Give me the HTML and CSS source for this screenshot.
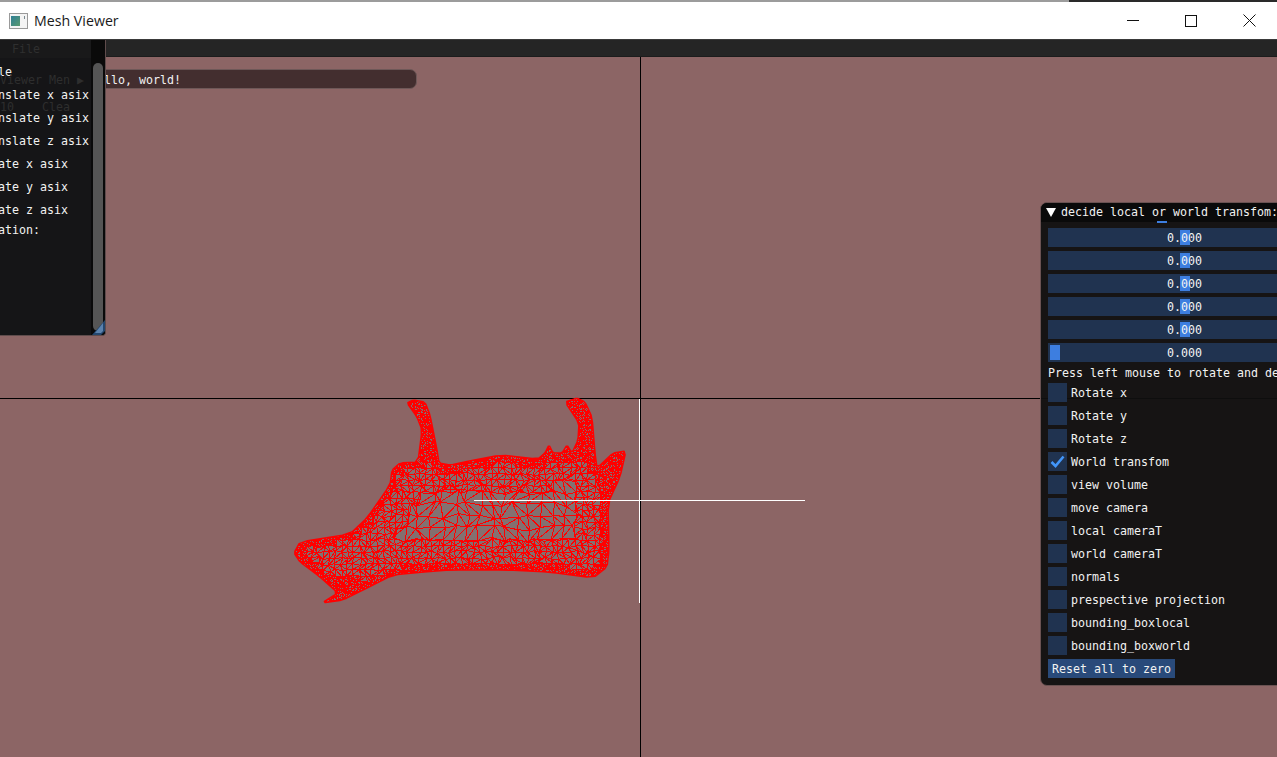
FILE: index.html
```html
<!DOCTYPE html>
<html lang="en">
<head>
    <meta charset="UTF-8">
    <title>Mesh Viewer</title>
    <link rel="stylesheet" href="styles.css">
</head>
<body>

<div class="top-edge">
    <div class="top-edge-light"></div>
    <div class="top-edge-dark"></div>
</div>

<header class="titlebar">
    <svg class="app-icon" width="19" height="16" viewBox="0 0 19 16">
        <defs>
            <linearGradient id="iconFill" x1="0" y1="0" x2="1" y2="1">
                <stop offset="0" stop-color="#2f7f95"/>
                <stop offset="1" stop-color="#5a9a70"/>
            </linearGradient>
        </defs>
        <rect x="0.5" y="0.5" width="18" height="15" fill="#f4f4f4" stroke="#9a9a9a"/>
        <rect x="2" y="3" width="9" height="10" fill="url(#iconFill)"/>
        <rect x="15" y="3" width="1" height="3" fill="#7a8a90"/>
    </svg>
    <span class="app-title">Mesh Viewer</span>
    <div class="win-buttons">
        <div class="win-button">
            <svg width="12" height="12" viewBox="0 0 12 12"><path d="M0 5.5H12" stroke="#111"/></svg>
        </div>
        <div class="win-button">
            <svg width="12" height="12" viewBox="0 0 12 12"><rect x="0.5" y="0.5" width="11" height="11" fill="none" stroke="#111"/></svg>
        </div>
        <div class="win-button">
            <svg width="13" height="13" viewBox="0 0 13 13"><path d="M0.5 0.5L12.5 12.5M12.5 0.5L0.5 12.5" stroke="#111"/></svg>
        </div>
    </div>
</header>

<main class="app">
    <div class="menubar"></div>

    <svg class="scene" viewBox="0 57 1277 700" width="1277" height="700">
        <defs>
            <clipPath id="meshClip">
                <polygon id="meshOutline" points="407,403 413,400 425,402 430,415 437,450 439,463 450,465 470,461 500,455 538,459 545,453 549,445 553,453 562,453 567,445 572,453 578,440 579,423 565,402 577,398 585,402 592,417 595,453 597,468 613,453 626,451 620,477 608,503 609,550 607,567 593,578 550,572 507,570 450,570 423,572 393,575 367,588 343,600 322,603 338,593 320,577 300,562 294,553 300,542 350,534 367,518 390,485 392,470 400,463 418,462 422,430 417,417"/>
            </clipPath>
        </defs>
        <path d="M0 398.5H1277M640.5 57V757" stroke="#000" shape-rendering="crispEdges"/>
        <use href="#meshOutline" class="mesh-fill"/>
        <path id="meshWires" class="mesh-wires" clip-path="url(#meshClip)"/>
        <use href="#meshOutline" class="mesh-edge"/>
        <path d="M474 500.5H805M639.5 399V603" stroke="#fff" shape-rendering="crispEdges"/>
    </svg>

    <div class="hello-bar">Hello, world!</div>

    <section class="left-panel">
        <div class="left-menu">File</div>
        <div class="left-rows">
            <div class="left-row">Scale</div>
            <div class="left-row">translate x asix</div>
            <div class="left-row">translate y asix</div>
            <div class="left-row">translate z asix</div>
            <div class="left-row">rotate x asix</div>
            <div class="left-row">rotate y asix</div>
            <div class="left-row">rotate z asix</div>
            <div class="left-row left-row-last">Rotation:</div>
        </div>
        <div class="ghost ghost-menu">Viewer Men ▶</div>
        <div class="ghost ghost-ten">10</div>
        <div class="ghost ghost-clear">Clea</div>
        <div class="scroll-track"><div class="scroll-grab"></div></div>
        <svg class="resize-grip" width="13" height="16" viewBox="0 0 13 16">
            <path d="M0 16L13 1V12L9 16Z" fill="#24476f"/>
            <path d="M3 14L11 4V12L9 14Z" fill="#5b82ad"/>
        </svg>
    </section>

    <section class="right-panel">
        <div class="right-title">
            <svg width="10" height="9" viewBox="0 0 10 9"><path d="M0 0H10L5 9Z" fill="#fff"/></svg>
            <span>decide local or world transfom:</span>
            <div class="title-sliver"></div>
        </div>
        <div class="right-body">
            <div class="slider"><div class="grab"></div><span>0.000</span></div>
            <div class="slider"><div class="grab"></div><span>0.000</span></div>
            <div class="slider"><div class="grab"></div><span>0.000</span></div>
            <div class="slider"><div class="grab"></div><span>0.000</span></div>
            <div class="slider"><div class="grab"></div><span>0.000</span></div>
            <div class="slider"><div class="grab grab-min"></div><span>0.000</span></div>
            <p class="hint">Press left mouse to rotate and decide</p>
            <label class="check"><span class="box"></span>Rotate x</label>
            <label class="check"><span class="box"></span>Rotate y</label>
            <label class="check"><span class="box"></span>Rotate z</label>
            <label class="check">
                <span class="box">
                    <svg width="15" height="13" viewBox="0 0 15 13"><path d="M1.5 7L5.5 11L13.5 1.5" fill="none" stroke="#4296fa" stroke-width="2.6"/></svg>
                </span>World transfom
            </label>
            <label class="check"><span class="box"></span>view volume</label>
            <label class="check"><span class="box"></span>move camera</label>
            <label class="check"><span class="box"></span>local cameraT</label>
            <label class="check"><span class="box"></span>world cameraT</label>
            <label class="check"><span class="box"></span>normals</label>
            <label class="check"><span class="box"></span>prespective projection</label>
            <label class="check"><span class="box"></span>bounding_boxlocal</label>
            <label class="check"><span class="box"></span>bounding_boxworld</label>
            <button class="reset">Reset all to zero</button>
        </div>
    </section>
</main>

<script src="mesh.js"></script>
</body>
</html>
```

FILE: styles.css
```css
* {
    box-sizing: border-box;
}
html, body {
    margin: 0;
    height: 100%;
    overflow: hidden;
}
body {
    display: flex;
    flex-direction: column;
    background: #fff;
    font-family: "DejaVu Sans Mono", monospace;
    font-size: 11.63px;
    color: #f2f2f2;
}

.top-edge {
    display: flex;
    height: 2px;
    flex: none;
}
.top-edge-light {
    width: 1069px;
    background: #9c9c9c;
}
.top-edge-dark {
    flex: 1;
    background: #2a2a2a;
}

.titlebar {
    display: flex;
    align-items: center;
    height: 37px;
    flex: none;
    padding-left: 9px;
    background: #fff;
    color: #1a1a1a;
}
.app-icon {
    margin-right: 6px;
}
.app-title {
    font-family: "Open Sans", sans-serif;
    font-size: 14.2px;
}
.win-buttons {
    display: flex;
    margin-left: auto;
    margin-right: -2px;
}
.win-button {
    display: flex;
    align-items: center;
    justify-content: center;
    width: 58.5px;
    height: 37px;
}

.app {
    position: relative;
    flex: 1;
    overflow: hidden;
    background: #8c6565;
    border-top: 1px solid #3a3a3a;
}
.menubar {
    height: 17px;
    background: #252525;
    border-bottom: 1px solid #1c1c1c;
}
.scene {
    display: block;
}
.mesh-fill {
    fill: #847070;
}
.mesh-wires {
    fill: none;
    stroke: #ff0000;
    stroke-width: 1;
    shape-rendering: crispEdges;
}
.mesh-edge {
    fill: none;
    stroke: #ff0000;
    stroke-width: 1.5;
    stroke-linejoin: round;
}

.hello-bar {
    position: absolute;
    left: 85px;
    top: 29px;
    width: 332px;
    height: 20px;
    padding-left: 4px;
    line-height: 20px;
    background: #432e2f;
    border: 1px solid #6e5858;
    border-radius: 7px;
}

.left-panel {
    position: absolute;
    left: -32px;
    top: 0;
    width: 138px;
    height: 296px;
    background: #151517;
    border: 1px solid #5f4c4c;
    border-left: 0;
    border-top: 0;
    border-bottom-right-radius: 4px;
    overflow: hidden;
}
.left-menu {
    height: 18px;
    padding-left: 44px;
    line-height: 18px;
    background: #19191a;
    color: #2f2f2f;
}
.left-rows {
    padding-left: 9px;
    padding-top: 3px;
}
.left-row {
    height: 23px;
    line-height: 23px;
}
.left-row-last {
    height: 17px;
    line-height: 17px;
}
.ghost {
    position: absolute;
    color: #2e2e2e;
    white-space: nowrap;
}
.ghost-menu {
    left: 32px;
    top: 33px;
}
.ghost-ten {
    left: 32px;
    top: 60px;
}
.ghost-clear {
    left: 74px;
    top: 60px;
}
.scroll-track {
    position: absolute;
    right: 0;
    top: 0;
    bottom: 0;
    width: 14px;
    padding: 23px 1px 4px 2px;
    background: #0a0a0a;
}
.scroll-grab {
    width: 10px;
    height: 100%;
    background: #555;
    border-radius: 5px;
}
.resize-grip {
    position: absolute;
    right: 0;
    bottom: 0;
}

.right-panel {
    position: absolute;
    left: 1040px;
    top: 162px;
    width: 300px;
    background: rgba(15, 15, 15, 0.94);
    border: 1px solid #6a5252;
    border-radius: 7px 0 0 7px;
}
.right-title {
    position: relative;
    display: flex;
    align-items: center;
    gap: 5px;
    height: 19px;
    padding: 0 0 1px 5px;
    background: #0a0a0a;
    border-radius: 6px 0 0 0;
    white-space: nowrap;
}
.title-sliver {
    position: absolute;
    left: 116px;
    bottom: -1px;
    width: 10px;
    height: 2px;
    background: #3d7ee0;
}
.right-body {
    display: flex;
    flex-direction: column;
    align-items: flex-start;
    gap: 4px;
    padding: 6px 0 7px 7px;
}
.slider {
    position: relative;
    display: flex;
    align-items: center;
    justify-content: center;
    width: 273px;
    height: 19px;
    background: #203350;
}
.slider span {
    position: relative;
}
.grab {
    position: absolute;
    left: 132px;
    top: 2px;
    width: 10px;
    height: 15px;
    background: #3d7ee0;
}
.grab-min {
    left: 2px;
}
.hint {
    margin: 0;
    height: 13px;
    line-height: 15px;
    white-space: nowrap;
}
.check {
    display: flex;
    align-items: center;
    gap: 4px;
    height: 19px;
    white-space: nowrap;
}
.box {
    display: flex;
    align-items: center;
    justify-content: center;
    width: 19px;
    height: 19px;
    background: #203350;
}
.reset {
    height: 19px;
    padding: 0 4px;
    border: 0;
    background: #294a7a;
    color: #f2f2f2;
    font: inherit;
}
```

FILE: mesh.js
```js
// wireframe for the model: quads get smaller towards the outline
const poly = document.getElementById('meshOutline');
let outline = poly.getAttribute('points').split(' ').map(p => p.split(',').map(Number));

// round the corners of the outline a little
function smooth(pts) {
    const out = [];
    pts.forEach((p, i) => {
        const q = pts[(i + 1) % pts.length];
        out.push([p[0] * 0.85 + q[0] * 0.15, p[1] * 0.85 + q[1] * 0.15]);
        out.push([p[0] * 0.15 + q[0] * 0.85, p[1] * 0.15 + q[1] * 0.85]);
    });
    return out;
}
outline = smooth(outline);
poly.setAttribute('points', outline.map(p => p.join(',')).join(' '));

function edgeDistance(x, y) {
    let best = 1e9;
    for (let i = 0; i < outline.length; i++) {
        const [ax, ay] = outline[i];
        const [bx, by] = outline[(i + 1) % outline.length];
        const dx = bx - ax, dy = by - ay;
        const t = Math.max(0, Math.min(1, ((x - ax) * dx + (y - ay) * dy) / (dx * dx + dy * dy || 1)));
        best = Math.min(best, Math.hypot(x - ax - t * dx, y - ay - t * dy));
    }
    return best;
}

function noise(x, y) {
    const n = Math.sin(x * 12.9898 + y * 78.233) * 43758.5453;
    return n - Math.floor(n);
}

function jitter(x, y, size) {
    return [
        x + (noise(x, y) - 0.5) * size * 0.7,
        y + (noise(y + 3, x) - 0.5) * size * 0.5
    ];
}

function targetSize(x, y) {
    // horns and the right jaw band are nearly solid
    if (y < 462 || x > 600 || (x < 360 && y > 578)) return 3;
    const d = edgeDistance(x, y);
    if (x < 400) return Math.min(6, 4 + d * 0.3);
    return Math.min(12, 4 + d * 0.25);
}

let d = '';
function split(x, y, size) {
    if (size > targetSize(x + size / 2, y + size / 2) && size > 3) {
        const half = size / 2;
        split(x, y, half);
        split(x + half, y, half);
        split(x, y + half, half);
        split(x + half, y + half, half);
        return;
    }
    const a = jitter(x, y, size);
    const b = jitter(x + size, y, size);
    const c = jitter(x + size, y + size, size);
    const e = jitter(x, y + size, size);
    d += `M${a}L${b}L${c}L${e}Z`;
    d += noise(x, y + size) > 0.5 ? `M${a}L${c}` : `M${b}L${e}`;
}

for (let x = 288; x < 632; x += 24) {
    for (let y = 396; y < 612; y += 24) {
        split(x, y, 24);
    }
}
document.getElementById('meshWires').setAttribute('d', d);
```
